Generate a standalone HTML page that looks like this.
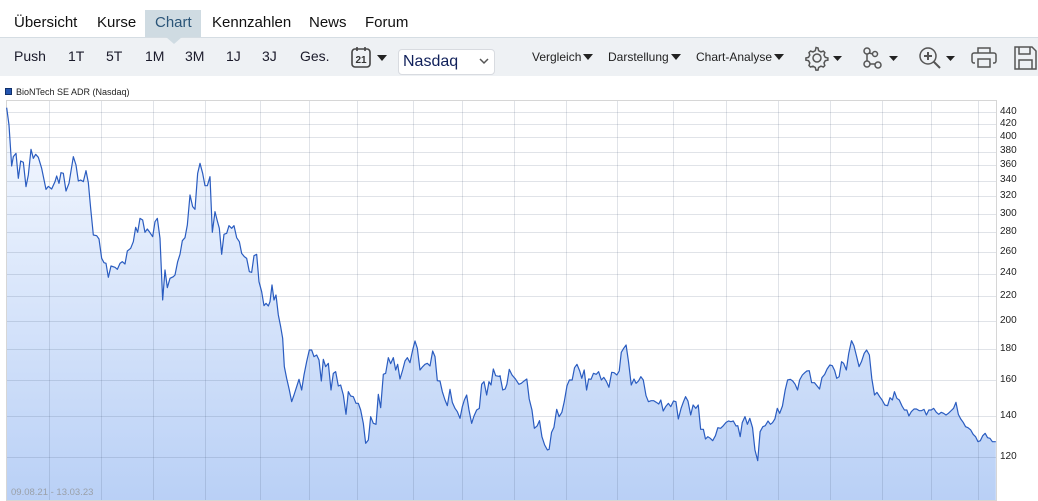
<!DOCTYPE html>
<html><head><meta charset="utf-8"><style>
*{margin:0;padding:0;box-sizing:border-box}
body{width:1038px;height:501px;overflow:hidden;background:#fff;font-family:"Liberation Sans",sans-serif;position:relative}
.a{position:absolute;white-space:nowrap}
.tab{top:14px;font-size:15px;color:#111}
.tb{top:48px;font-size:14px;color:#1a1a2a}
.dd{top:50px;font-size:12px;color:#222}
.tri{display:inline-block;width:0;height:0;border-left:5px solid transparent;border-right:5px solid transparent;border-top:6px solid #222;margin-left:2px;vertical-align:1px}
.yl{position:absolute;left:1000px;font-size:10px;color:#222;line-height:10px}
</style></head><body>
<div class="a" style="left:145px;top:10px;width:56px;height:27px;background:#cfdbe2"></div>
<div class="a" style="left:0;top:37px;width:1038px;height:39px;background:#eef1f4;border-top:1px solid #d5dde3"></div>
<div class="a" style="left:166px;top:37px;width:0;height:0;border-left:8px solid transparent;border-right:8px solid transparent;border-top:7px solid #cfdbe2"></div>
<div class="a tab" style="left:14px">Übersicht</div>
<div class="a tab" style="left:97px">Kurse</div>
<div class="a tab" style="left:155px;color:#2b5578">Chart</div>
<div class="a tab" style="left:212px">Kennzahlen</div>
<div class="a tab" style="left:309px">News</div>
<div class="a tab" style="left:365px">Forum</div>
<div class="a tb" style="left:14px">Push</div>
<div class="a tb" style="left:68px">1T</div>
<div class="a tb" style="left:106px">5T</div>
<div class="a tb" style="left:145px">1M</div>
<div class="a tb" style="left:185px">3M</div>
<div class="a tb" style="left:226px">1J</div>
<div class="a tb" style="left:262px">3J</div>
<div class="a tb" style="left:300px">Ges.</div>
<svg class="a" style="left:350px;top:46px" width="40" height="24" viewBox="0 0 40 24">
<rect x="2" y="3" width="18" height="18" rx="3" fill="none" stroke="#444" stroke-width="1.6"/>
<line x1="7" y1="1" x2="7" y2="5" stroke="#444" stroke-width="1.6"/><line x1="15" y1="1" x2="15" y2="5" stroke="#444" stroke-width="1.6"/>
<text x="11" y="17" font-size="10" font-weight="bold" text-anchor="middle" fill="#333" font-family="Liberation Sans">21</text>
<path d="M27 9h10l-5 6z" fill="#222"/></svg>
<div class="a" style="left:398px;top:49px;width:97px;height:26px;background:#fff;border:1px solid #d8dbe0;border-radius:4px"></div>
<div class="a" style="left:403px;top:53px;font-size:16px;color:#10205a">Nasdaq</div>
<svg class="a" style="left:478px;top:55px" width="12" height="12"><path d="M2 4l4 4 4-4" fill="none" stroke="#555" stroke-width="1.5"/></svg>
<div class="a dd" style="left:532px">Vergleich<span class="tri"></span></div>
<div class="a dd" style="left:608px">Darstellung<span class="tri"></span></div>
<div class="a dd" style="left:696px">Chart-Analyse<span class="tri"></span></div>
<svg class="a" style="left:800px;top:44px" width="238" height="28" viewBox="0 0 238 28" fill="none" stroke="#555" stroke-width="1.5">
<path d="M16 3.5l2 .5 .6 2.6 2.3 1.3 2.5-.8 1.4 1.5-.8 2.5 1.3 2.3 2.6.6v2.1l-2.6.6-1.3 2.3.8 2.5-1.4 1.5-2.5-.8-2.3 1.3-.6 2.6h-2.1l-.6-2.6-2.3-1.3-2.5.8-1.5-1.5.8-2.5-1.3-2.3-2.6-.6v-2.1l2.6-.6 1.3-2.3-.8-2.5 1.5-1.5 2.5.8 2.3-1.3.6-2.6z"/>
<circle cx="17" cy="14" r="4"/>
<path d="M33 12h9l-4.5 5z" fill="#222" stroke="none"/>
<circle cx="67" cy="7" r="3"/><circle cx="67" cy="20" r="3"/><circle cx="78" cy="21" r="3"/><circle cx="75" cy="10" r="2.5"/>
<path d="M67 10v7M70 20h5M69 9l4 1"/>
<path d="M89 12h9l-4.5 5z" fill="#222" stroke="none"/>
<circle cx="128" cy="12" r="8"/><path d="M134 18l6 6M128 8v8M124 12h8" stroke-width="2"/>
<path d="M146 12h9l-4.5 5z" fill="#222" stroke="none"/>
<path d="M178 9V4h12v5M175 19h-1a2 2 0 0 1-2-2v-6a2 2 0 0 1 2-2h20a2 2 0 0 1 2 2v6a2 2 0 0 1-2 2h-1"/><rect x="178" y="15" width="12" height="8"/>
<path d="M215 3h17l4 4v18h-21zM219 3v7h11V3M219 25v-9h13v9"/>
</svg>
<div class="a" style="left:5px;top:88px;width:7px;height:7px;background:#2455b0;border:1px solid #10306a"></div>
<div class="a" style="left:16px;top:87px;font-size:9px;color:#222">BioNTech SE ADR (Nasdaq)</div>
<svg class="a" style="left:0;top:0" width="1038" height="501">
<defs><linearGradient id="g" gradientUnits="userSpaceOnUse" x1="0" y1="15" x2="0" y2="1215"><stop offset="0" stop-color="#f7faff"/><stop offset="1" stop-color="#b9d0f6"/></linearGradient></defs>
<rect x="6" y="100" width="991" height="400" fill="#fff"/>
<g transform="translate(0,95) scale(0.33333,0.33333)">
<polygon fill="url(#g)" points="18,1215 20,38 27,90 35,213 40,185 48,175 55,250 62,198 70,202 78,275 85,240 93,163 100,190 107,178 115,187 125,220 138,283 145,274 155,282 165,260 170,243 177,265 183,233 190,235 198,288 207,265 220,185 228,210 235,258 242,255 250,260 258,227 265,263 272,340 280,420 290,422 297,432 305,490 312,503 318,505 325,547 333,513 345,517 352,523 360,505 367,500 375,507 382,468 392,460 400,440 407,397 413,412 420,370 428,375 435,412 442,402 450,413 458,425 465,380 472,370 480,430 488,615 495,525 502,578 510,550 520,545 525,540 533,500 540,478 547,437 555,428 562,390 570,300 578,335 585,343 593,235 600,205 608,235 615,272 622,272 630,245 637,412 645,350 652,378 658,400 665,478 672,418 680,415 687,392 695,400 702,392 710,428 718,440 725,475 733,485 740,490 748,530 755,532 762,482 770,478 777,560 785,590 792,632 798,625 805,633 810,620 816,570 822,615 828,600 835,660 842,695 848,730 853,815 860,850 868,885 875,920 882,900 890,875 897,853 905,885 912,840 920,800 928,765 935,765 942,785 950,780 957,795 964,858 970,793 977,815 985,805 993,885 1000,835 1007,830 1015,873 1022,870 1030,900 1038,958 1045,890 1052,903 1060,905 1068,925 1075,925 1082,945 1090,985 1097,1045 1105,1035 1112,965 1120,985 1128,988 1135,898 1142,938 1150,838 1157,835 1165,788 1172,806 1180,788 1187,825 1193,808 1200,852 1208,825 1215,798 1222,788 1230,803 1238,765 1245,738 1252,760 1260,825 1268,815 1275,808 1282,805 1290,813 1298,768 1305,785 1312,857 1320,858 1327,890 1335,915 1342,932 1350,883 1357,922 1365,940 1372,950 1380,970 1387,935 1393,915 1400,900 1407,945 1415,985 1422,963 1430,945 1438,940 1445,868 1452,860 1460,900 1467,860 1473,870 1480,822 1487,842 1502,845 1502,1215"/>
</g>
<g transform="translate(500,95) scale(0.3436,0.33333)">
<polygon fill="url(#g)" points="-2,1215 -2,845 0,842 8,885 15,882 20,868 27,823 35,840 45,852 55,868 62,865 70,858 78,852 85,912 93,945 100,1000 108,993 115,977 122,1025 130,1050 138,1065 143,1063 150,1012 157,997 165,943 172,965 180,952 187,920 195,872 202,855 210,855 217,818 224,808 232,828 238,850 245,825 252,885 258,852 265,853 272,835 280,838 287,830 295,855 302,847 310,860 317,877 325,832 332,833 340,840 347,828 353,772 360,760 367,750 374,800 382,870 390,852 396,865 403,858 410,845 417,855 425,902 432,920 440,917 447,917 455,922 462,927 468,915 475,948 482,935 490,925 497,935 505,918 512,920 519,972 527,940 534,920 540,905 547,918 555,960 562,930 570,940 577,930 584,1003 592,1003 598,1032 605,1025 612,1030 619,1037 627,1022 634,998 642,1000 650,992 658,982 665,978 672,980 679,978 687,993 692,992 699,1025 705,983 713,965 720,988 727,970 735,998 742,1065 750,1097 757,1010 765,995 772,992 780,978 787,988 793,983 800,972 807,940 814,955 822,933 830,885 837,855 845,853 852,858 859,868 866,885 872,855 880,840 887,833 893,828 900,827 907,863 915,863 922,872 930,882 937,848 945,838 952,822 960,810 967,812 974,827 980,850 987,845 994,800 1000,805 1008,825 1015,775 1023,737 1030,752 1038,785 1045,815 1052,800 1060,775 1067,765 1075,780 1082,850 1090,900 1097,892 1105,905 1112,915 1120,930 1128,932 1135,908 1142,915 1148,890 1155,910 1162,915 1170,933 1177,945 1184,945 1190,963 1197,950 1205,942 1212,942 1220,947 1227,947 1234,943 1241,960 1248,945 1255,945 1262,940 1270,952 1277,958 1284,952 1291,955 1298,960 1305,955 1312,948 1320,940 1327,922 1334,958 1341,972 1348,982 1355,995 1362,998 1370,1005 1377,1018 1384,1025 1391,1040 1398,1037 1405,1022 1412,1015 1419,1028 1426,1030 1433,1040 1443,1040 1443,1215"/>
</g>
<g stroke="rgba(60,80,110,0.16)" stroke-width="1">
<path d="M6 112.5H997M6 124.5H997M6 137.5H997M6 152.5H997M6 165.5H997M6 181.5H997M6 196.5H997M6 214.5H997M6 232.5H997M6 252.5H997M6 274.5H997M6 296.5H997M6 321.5H997M6 349.5H997M6 380.5H997M6 416.5H997M6 457.5H997"/>
<path d="M49.5 100V500M101.5 100V500M153.5 100V500M205.5 100V500M260.5 100V500M309.5 100V500M357.5 100V500M413.5 100V500M462.5 100V500M514.5 100V500M566.5 100V500M617.5 100V500M673.5 100V500M726.5 100V500M778.5 100V500M830.5 100V500M882.5 100V500M931.5 100V500M978.5 100V500"/>
</g>
<rect x="6.5" y="100.5" width="990" height="400" fill="none" stroke="#d6d6d6"/>
<g transform="translate(0,95) scale(0.33333,0.33333)">
<polyline fill="none" stroke="#2a5cc0" stroke-width="3.6" stroke-linejoin="round" points="20,38 27,90 35,213 40,185 48,175 55,250 62,198 70,202 78,275 85,240 93,163 100,190 107,178 115,187 125,220 138,283 145,274 155,282 165,260 170,243 177,265 183,233 190,235 198,288 207,265 220,185 228,210 235,258 242,255 250,260 258,227 265,263 272,340 280,420 290,422 297,432 305,490 312,503 318,505 325,547 333,513 345,517 352,523 360,505 367,500 375,507 382,468 392,460 400,440 407,397 413,412 420,370 428,375 435,412 442,402 450,413 458,425 465,380 472,370 480,430 488,615 495,525 502,578 510,550 520,545 525,540 533,500 540,478 547,437 555,428 562,390 570,300 578,335 585,343 593,235 600,205 608,235 615,272 622,272 630,245 637,412 645,350 652,378 658,400 665,478 672,418 680,415 687,392 695,400 702,392 710,428 718,440 725,475 733,485 740,490 748,530 755,532 762,482 770,478 777,560 785,590 792,632 798,625 805,633 810,620 816,570 822,615 828,600 835,660 842,695 848,730 853,815 860,850 868,885 875,920 882,900 890,875 897,853 905,885 912,840 920,800 928,765 935,765 942,785 950,780 957,795 964,858 970,793 977,815 985,805 993,885 1000,835 1007,830 1015,873 1022,870 1030,900 1038,958 1045,890 1052,903 1060,905 1068,925 1075,925 1082,945 1090,985 1097,1045 1105,1035 1112,965 1120,985 1128,988 1135,898 1142,938 1150,838 1157,835 1165,788 1172,806 1180,788 1187,825 1193,808 1200,852 1208,825 1215,798 1222,788 1230,803 1238,765 1245,738 1252,760 1260,825 1268,815 1275,808 1282,805 1290,813 1298,768 1305,785 1312,857 1320,858 1327,890 1335,915 1342,932 1350,883 1357,922 1365,940 1372,950 1380,970 1387,935 1393,915 1400,900 1407,945 1415,985 1422,963 1430,945 1438,940 1445,868 1452,860 1460,900 1467,860 1473,870 1480,822 1487,842 1502,845"/>
</g>
<g transform="translate(500,95) scale(0.3436,0.33333)">
<polyline fill="none" stroke="#2a5cc0" stroke-width="3.5" stroke-linejoin="round" points="-2,845 0,842 8,885 15,882 20,868 27,823 35,840 45,852 55,868 62,865 70,858 78,852 85,912 93,945 100,1000 108,993 115,977 122,1025 130,1050 138,1065 143,1063 150,1012 157,997 165,943 172,965 180,952 187,920 195,872 202,855 210,855 217,818 224,808 232,828 238,850 245,825 252,885 258,852 265,853 272,835 280,838 287,830 295,855 302,847 310,860 317,877 325,832 332,833 340,840 347,828 353,772 360,760 367,750 374,800 382,870 390,852 396,865 403,858 410,845 417,855 425,902 432,920 440,917 447,917 455,922 462,927 468,915 475,948 482,935 490,925 497,935 505,918 512,920 519,972 527,940 534,920 540,905 547,918 555,960 562,930 570,940 577,930 584,1003 592,1003 598,1032 605,1025 612,1030 619,1037 627,1022 634,998 642,1000 650,992 658,982 665,978 672,980 679,978 687,993 692,992 699,1025 705,983 713,965 720,988 727,970 735,998 742,1065 750,1097 757,1010 765,995 772,992 780,978 787,988 793,983 800,972 807,940 814,955 822,933 830,885 837,855 845,853 852,858 859,868 866,885 872,855 880,840 887,833 893,828 900,827 907,863 915,863 922,872 930,882 937,848 945,838 952,822 960,810 967,812 974,827 980,850 987,845 994,800 1000,805 1008,825 1015,775 1023,737 1030,752 1038,785 1045,815 1052,800 1060,775 1067,765 1075,780 1082,850 1090,900 1097,892 1105,905 1112,915 1120,930 1128,932 1135,908 1142,915 1148,890 1155,910 1162,915 1170,933 1177,945 1184,945 1190,963 1197,950 1205,942 1212,942 1220,947 1227,947 1234,943 1241,960 1248,945 1255,945 1262,940 1270,952 1277,958 1284,952 1291,955 1298,960 1305,955 1312,948 1320,940 1327,922 1334,958 1341,972 1348,982 1355,995 1362,998 1370,1005 1377,1018 1384,1025 1391,1040 1398,1037 1405,1022 1412,1015 1419,1028 1426,1030 1433,1040 1443,1040"/>
</g>
<text x="11" y="495" font-size="9.5" fill="#9aa0a8" font-family="Liberation Sans">09.08.21 - 13.03.23</text>
</svg>
<div class="yl" style="top:107px">440</div>
<div class="yl" style="top:119px">420</div>
<div class="yl" style="top:132px">400</div>
<div class="yl" style="top:146px">380</div>
<div class="yl" style="top:160px">360</div>
<div class="yl" style="top:175px">340</div>
<div class="yl" style="top:191px">320</div>
<div class="yl" style="top:209px">300</div>
<div class="yl" style="top:227px">280</div>
<div class="yl" style="top:247px">260</div>
<div class="yl" style="top:268px">240</div>
<div class="yl" style="top:291px">220</div>
<div class="yl" style="top:316px">200</div>
<div class="yl" style="top:344px">180</div>
<div class="yl" style="top:375px">160</div>
<div class="yl" style="top:411px">140</div>
<div class="yl" style="top:452px">120</div>
</body></html>
